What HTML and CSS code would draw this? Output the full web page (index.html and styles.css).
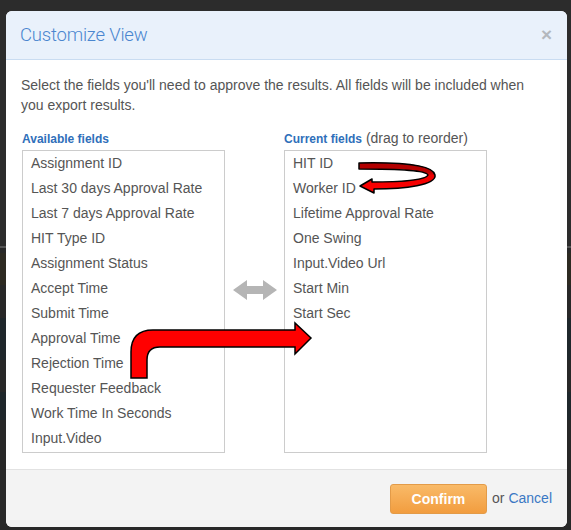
FILE: index.html
```html
<!DOCTYPE html>
<html>
<head>
<meta charset="utf-8">
<link rel="stylesheet" href="styles.css">
</head>
<body>
<div class="modal">
  <div class="modal-header">
    <h3 class="title">Customize View</h3>
    <span class="close">×</span>
  </div>
  <div class="modal-body">
    <p class="intro">Select the fields you'll need to approve the results. All fields will be included when you export results.</p>
    <div class="columns">
      <div class="col">
        <div class="label"><strong>Available fields</strong></div>
        <ul class="list">
          <li>Assignment ID</li>
          <li>Last 30 days Approval Rate</li>
          <li>Last 7 days Approval Rate</li>
          <li>HIT Type ID</li>
          <li>Assignment Status</li>
          <li>Accept Time</li>
          <li>Submit Time</li>
          <li>Approval Time</li>
          <li>Rejection Time</li>
          <li>Requester Feedback</li>
          <li>Work Time In Seconds</li>
          <li>Input.Video</li>
        </ul>
      </div>
      <div class="mid">
        <svg class="swap" width="44" height="20" viewBox="0 0 44 20"><path d="M0 10 L14 0 L14 6 L30 6 L30 0 L44 10 L30 20 L30 14 L14 14 L14 20 Z" fill="#b5b5b5"/></svg>
      </div>
      <div class="col">
        <div class="label"><strong>Current fields</strong> (drag to reorder)</div>
        <ul class="list">
          <li>HIT ID</li>
          <li>Worker ID</li>
          <li>Lifetime Approval Rate</li>
          <li>One Swing</li>
          <li>Input.Video Url</li>
          <li>Start Min</li>
          <li>Start Sec</li>
        </ul>
      </div>
    </div>
  </div>
  <div class="modal-footer">
    <button class="btn-confirm">Confirm</button>
    <span class="or">or</span>
    <a class="cancel" href="#">Cancel</a>
  </div>
</div>
<svg class="annot" width="571" height="530" viewBox="0 0 571 530">
  <defs>
    <linearGradient id="rib" gradientUnits="userSpaceOnUse" x1="0" y1="163" x2="0" y2="193">
      <stop offset="0" stop-color="#b00000"/>
      <stop offset="0.3" stop-color="#b80000"/>
      <stop offset="0.42" stop-color="#ee0000"/>
      <stop offset="1" stop-color="#ff0000"/>
    </linearGradient>
  </defs>
  <path d="M359 163 C405 162 433 165 435 175 C437 185 405 189 374 189 L374 193 L360 186 L372 179 L372 182 C400 182 426 180 428 175 C426 170 400 169 359 169 Z" fill="url(#rib)" stroke="#000" stroke-width="1.5" stroke-linejoin="round"/>
  <path d="M131 378 L131 352 Q131 330 153 330 L295 330 L295 323 L311 338 L295 354 L295 347 L160 347 Q147 347 147 360 L147 378 Z" fill="#ff0000" stroke="#000" stroke-width="1.5" stroke-linejoin="miter"/>
</svg>
</body>
</html>
```

FILE: styles.css
```css
html, body {
  margin: 0;
  padding: 0;
}
body {
  width: 571px;
  height: 530px;
  overflow: hidden;
  position: relative;
  box-sizing: border-box;
  padding: 11px 4px 0 6px;
  font-family: "Liberation Sans", Arial, sans-serif;
  background: linear-gradient(to bottom,
    #2c2c2c 0, #2c2c2c 246px,
    #555 246px, #555 248px,
    #282828 248px, #282828 253px,
    #2d2a22 253px, #2d2a22 285px,
    #282828 285px, #282828 318px,
    #1f272b 318px, #1f272b 360px,
    #282828 360px, #282828 392px,
    #1f272b 392px, #1f272b 420px,
    #282828 420px);
}
.modal {
  width: 561px;
  height: 516px;
  background: #fff;
  border-radius: 6px;
  overflow: hidden;
  display: flex;
  flex-direction: column;
}
.modal-header {
  height: 48px;
  background: #e9f1fb;
  border-bottom: 1px solid #c9dcf1;
  display: flex;
  align-items: center;
  justify-content: space-between;
  padding: 0 15px 0 14px;
}
.title {
  margin: 0;
  font-family: Roboto, "Liberation Sans", sans-serif;
  font-weight: 300;
  font-size: 18.5px;
  color: #4a86cf;
  letter-spacing: -0.2px;
}
.close {
  font-size: 19px;
  font-weight: bold;
  color: #b4b8bd;
  line-height: 1;
  margin-top: -2px;
}
.modal-body {
  padding: 15px 16px 16px 15px;
  height: 378px;
}
.intro {
  margin: 0 0 15px;
  max-width: 515px;
  font-size: 14px;
  line-height: 20px;
  color: #555;
}
.columns {
  display: flex;
  padding-left: 1px;
}
.col {
  width: 203px;
}
.mid {
  width: 59px;
  display: flex;
  justify-content: center;
  padding-top: 150px;
  box-sizing: border-box;
}
.swap {
  display: block;
}
.label {
  height: 17px;
  line-height: 17px;
  margin-bottom: 3px;
  font-size: 14px;
  color: #555;
  white-space: nowrap;
}
.label strong {
  font-size: 12px;
  font-weight: bold;
  color: #2f6fba;
}
.list {
  list-style: none;
  margin: 0;
  padding: 0 0 1px;
  height: 300px;
  border: 1px solid #cccccc;
}
.list li {
  height: 25px;
  line-height: 24px;
  padding-left: 8px;
  font-size: 14px;
  color: #555;
  white-space: nowrap;
}
.modal-footer {
  flex: 1;
  background: #f3f3f3;
  border-top: 1px solid #e2e2e2;
  display: flex;
  justify-content: flex-end;
  align-items: flex-start;
  padding: 14px 15px 0 0;
}
.btn-confirm {
  width: 97px;
  height: 30px;
  border: 1px solid #e39b48;
  border-radius: 3px;
  background: linear-gradient(to bottom, #f9ba68, #f29d3f);
  color: #fff;
  font-family: "Liberation Sans", Arial, sans-serif;
  font-weight: bold;
  font-size: 14px;
  padding: 0;
}
.or {
  margin-left: 5px;
  line-height: 28px;
  font-size: 14px;
  color: #555;
}
.cancel {
  margin-left: 4px;
  line-height: 28px;
  font-size: 14px;
  color: #3a78c4;
  text-decoration: none;
}
.annot {
  position: absolute;
  left: 0;
  top: 0;
  pointer-events: none;
}
```
